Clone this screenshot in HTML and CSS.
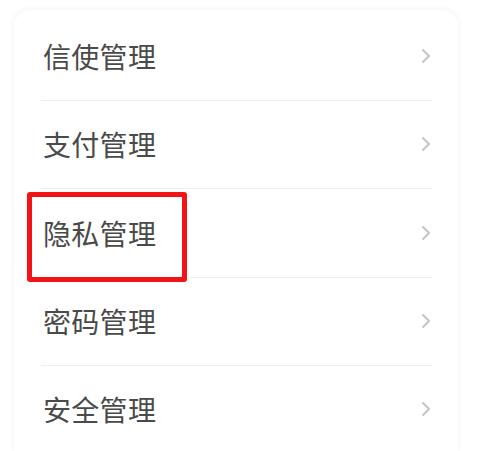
FILE: index.html
```html
<!DOCTYPE html>
<html lang="zh-CN">
<head>
<meta charset="utf-8">
<link rel="stylesheet" href="styles.css">
</head>
<body>
<div class="card">
  <div class="row"><span class="label">信使管理</span><svg class="chev" width="10" height="16" viewBox="0 0 10 16"><polyline points="2,2 8,8 2,14"/></svg></div>
  <div class="row"><span class="label">支付管理</span><svg class="chev" width="10" height="16" viewBox="0 0 10 16"><polyline points="2,2 8,8 2,14"/></svg></div>
  <div class="row"><span class="label">隐私管理</span><svg class="chev" width="10" height="16" viewBox="0 0 10 16"><polyline points="2,2 8,8 2,14"/></svg><span class="highlight"></span></div>
  <div class="row"><span class="label">密码管理</span><svg class="chev" width="10" height="16" viewBox="0 0 10 16"><polyline points="2,2 8,8 2,14"/></svg></div>
  <div class="row last"><span class="label">安全管理</span><svg class="chev" width="10" height="16" viewBox="0 0 10 16"><polyline points="2,2 8,8 2,14"/></svg></div>
</div>
</body>
</html>
```
FILE: styles.css
```css
html, body {
  margin: 0;
  padding: 0;
  background: #ffffff;
  overflow: hidden;
}
body {
  width: 480px;
  height: 451px;
  font-family: "Noto Sans CJK SC", "Noto Sans", sans-serif;
}
.card {
  margin: 10px 22px 0 14px;
  height: 441px;
  background: #fff;
  border-radius: 16px 16px 0 0;
  box-shadow: 0 0 6px rgba(0, 0, 0, 0.07);
  padding-top: 2px;
  box-sizing: border-box;
  overflow: hidden;
}
.row {
  position: relative;
  display: flex;
  align-items: center;
  justify-content: space-between;
  height: 88.5px;
  margin: 0 26px 0 27px;
  border-bottom: 1px solid #efefef;
  box-sizing: border-box;
}
.row.last {
  border-bottom: none;
  height: 86px;
}
.label {
  padding-left: 2px;
  font-size: 28px;
  letter-spacing: 0.3px;
  color: #4a4a4a;
  line-height: 1;
}
.chev {
  margin-right: 1px;
}
.chev polyline {
  fill: none;
  stroke: #c3c3ca;
  stroke-width: 2;
  stroke-linecap: round;
  stroke-linejoin: round;
}
.highlight {
  position: absolute;
  left: -14px;
  top: 3px;
  width: 160px;
  height: 90px;
  border: 5px solid #f21414;
  border-radius: 3px;
  box-sizing: border-box;
}
```
